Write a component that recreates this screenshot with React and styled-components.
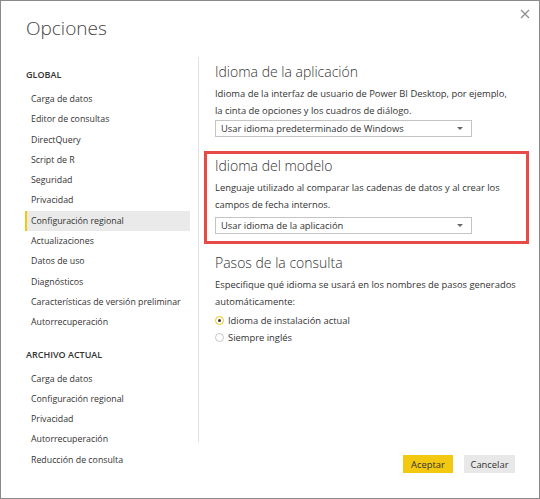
import React from "react";
import styled, { createGlobalStyle } from "styled-components";

const GlobalStyle = createGlobalStyle`
  body {
    margin: 0;
    background: #ffffff;
    font-family: "Open Sans", "Noto Sans", sans-serif;
    color: #333333;
  }
`;

const globalItems = [
  "Carga de datos",
  "Editor de consultas",
  "DirectQuery",
  "Script de R",
  "Seguridad",
  "Privacidad",
  "Configuración regional",
  "Actualizaciones",
  "Datos de uso",
  "Diagnósticos",
  "Características de versión preliminar",
  "Autorrecuperación",
];

const fileItems = [
  "Carga de datos",
  "Configuración regional",
  "Privacidad",
  "Autorrecuperación",
  "Reducción de consulta",
];

const App = () => {
  return (
    <>
      <GlobalStyle />
      <Dialog>
        <CloseButton aria-label="Cerrar">
          <svg width="10" height="10" viewBox="0 0 10 10">
            <path d="M1 1 L9 9 M9 1 L1 9" stroke="#8c8c8c" strokeWidth="1.2" />
          </svg>
        </CloseButton>
        <Title>Opciones</Title>
        <Body>
          <Sidebar>
            <NavHeading>GLOBAL</NavHeading>
            {globalItems.map((item) => (
              <NavItem key={item} $active={item === "Configuración regional"}>
                {item}
              </NavItem>
            ))}
            <NavHeading $spaced>ARCHIVO ACTUAL</NavHeading>
            {fileItems.map((item) => (
              <NavItem key={item}>{item}</NavItem>
            ))}
          </Sidebar>
          <Main>
            <Panel>
              <Section>
                <SectionTitle>Idioma de la aplicación</SectionTitle>
                <Description>
                  Idioma de la interfaz de usuario de Power BI Desktop, por ejemplo,
                  <br />
                  la cinta de opciones y los cuadros de diálogo.
                </Description>
                <Select $tight>
                  <span>Usar idioma predeterminado de Windows</span>
                  <Caret />
                </Select>
              </Section>
              <Section $highlighted>
                <SectionTitle>Idioma del modelo</SectionTitle>
                <Description>
                  Lenguaje utilizado al comparar las cadenas de datos y al crear los
                  <br />
                  campos de fecha internos.
                </Description>
                <Select>
                  <span>Usar idioma de la aplicación</span>
                  <Caret />
                </Select>
              </Section>
              <Section>
                <SectionTitle>Pasos de la consulta</SectionTitle>
                <Description>
                  Especifique qué idioma se usará en los nombres de pasos generados
                  <br />
                  automáticamente:
                </Description>
                <RadioGroup>
                  <RadioRow>
                    <Radio $checked />
                    Idioma de instalación actual
                  </RadioRow>
                  <RadioRow>
                    <Radio />
                    Siempre inglés
                  </RadioRow>
                </RadioGroup>
              </Section>
            </Panel>
            <Footer>
              <Button $primary>Aceptar</Button>
              <Button>Cancelar</Button>
            </Footer>
          </Main>
        </Body>
      </Dialog>
    </>
  );
};

const Dialog = styled.div`
  position: relative;
  box-sizing: border-box;
  width: 540px;
  height: 499px;
  border: 1px solid #8a8a8a;
  background: #ffffff;
  overflow: hidden;
`;

const CloseButton = styled.button`
  position: absolute;
  top: 7px;
  right: 8px;
  width: 12px;
  height: 12px;
  padding: 0;
  border: none;
  background: transparent;
  display: grid;
  place-items: center;
`;

const Title = styled.h1`
  margin: 0;
  padding: 13px 0 0 25px;
  font-size: 19px;
  line-height: 28px;
  font-weight: 300;
  color: #444444;
`;

const Body = styled.div`
  display: grid;
  grid-template-columns: 197px 1fr;
  margin-top: 15px;
`;

const Sidebar = styled.nav`
  display: flex;
  flex-direction: column;
  padding: 8px 8px 0 24px;
`;

const NavHeading = styled.div`
  height: 20px;
  line-height: 20px;
  padding-left: 1px;
  margin: ${({ $spaced }) => ($spaced ? "12px 0 4px" : "0 0 4px")};
  font-size: 9px;
  font-weight: 600;
  color: #333333;
`;

const NavItem = styled.div`
  box-sizing: border-box;
  height: 20.3px;
  line-height: 20.3px;
  padding-left: 4px;
  border-left: 2px solid ${({ $active }) => ($active ? "#f2c811" : "transparent")};
  background: ${({ $active }) => ($active ? "#eaeaea" : "transparent")};
  font-size: 8.8px;
  color: #333333;
  white-space: nowrap;
`;

const Main = styled.div`
  display: flex;
  flex-direction: column;
`;

const Panel = styled.div`
  box-sizing: border-box;
  height: 385px;
  border-left: 1px solid #e2e2e2;
  padding: 0 10px 0 5px;
  display: flex;
  flex-direction: column;
  gap: 5px;
`;

const Section = styled.section`
  border: 3px solid ${({ $highlighted }) => ($highlighted ? "#e84a48" : "transparent")};
  padding: 1px 8px 7px;

  & + & {
    margin-top: -1px;
  }
  &:last-child {
    margin-top: 0;
  }
`;

const SectionTitle = styled.h2`
  margin: 0 0 2px;
  font-size: 14px;
  line-height: 22px;
  font-weight: 300;
  color: #333333;
`;

const Description = styled.p`
  margin: 0;
  font-size: 9.4px;
  line-height: 17px;
  color: #333333;
  white-space: nowrap;
`;

const Select = styled.div`
  box-sizing: border-box;
  width: 257px;
  height: 17px;
  margin-top: ${({ $tight }) => ($tight ? "1px" : "4px")};
  padding: 0 8px 0 5px;
  border: 1px solid #c4c4c4;
  display: flex;
  align-items: center;
  justify-content: space-between;
  font-size: 9.4px;
  color: #333333;
`;

const Caret = styled.span`
  width: 0;
  height: 0;
  border-left: 3px solid transparent;
  border-right: 3px solid transparent;
  border-top: 3px solid #666666;
`;

const RadioGroup = styled.div`
  margin-top: 2px;
  display: flex;
  flex-direction: column;
`;

const RadioRow = styled.label`
  display: flex;
  align-items: center;
  gap: 4px;
  height: 17px;
  font-size: 9.4px;
  color: #333333;
`;

const Radio = styled.span`
  box-sizing: border-box;
  width: 9px;
  height: 9px;
  border-radius: 50%;
  border: 1px solid ${({ $checked }) => ($checked ? "#f2c811" : "#c6c6c6")};
  display: grid;
  place-items: center;
  &::after {
    content: "";
    width: 3px;
    height: 3px;
    border-radius: 50%;
    background: ${({ $checked }) => ($checked ? "#333333" : "transparent")};
  }
`;

const Footer = styled.div`
  display: flex;
  justify-content: flex-end;
  gap: 11px;
  margin-top: 13px;
  padding-right: 24px;
`;

const Button = styled.button`
  width: ${({ $primary }) => ($primary ? "50px" : "51px")};
  height: 18px;
  padding: 0;
  border: none;
  background: ${({ $primary }) => ($primary ? "#f2c811" : "#e8e8e8")};
  font-family: "Open Sans", "Noto Sans", sans-serif;
  font-size: 9.4px;
  color: #333333;
`;

export default App;
